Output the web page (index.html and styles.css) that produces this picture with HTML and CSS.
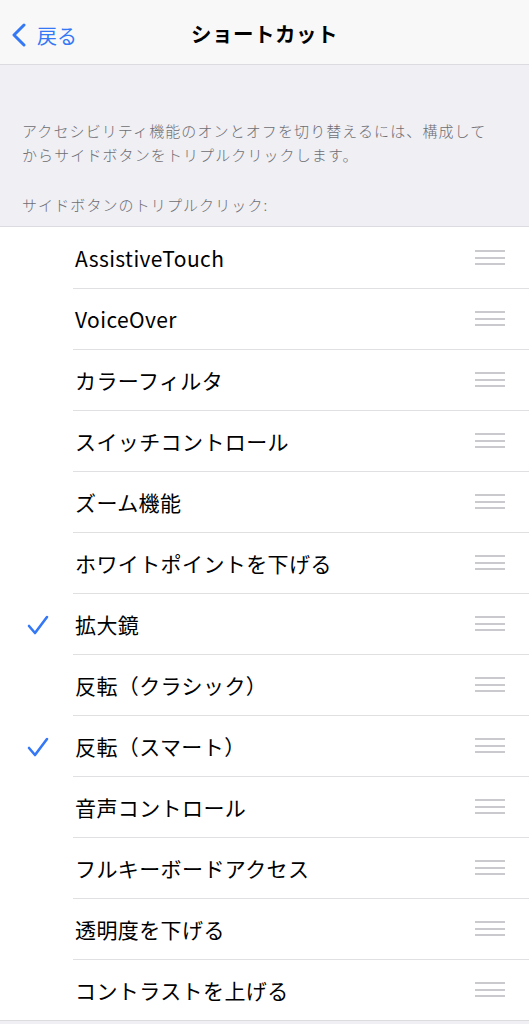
FILE: index.html
```html
<!DOCTYPE html>
<html lang="ja">
<head>
  <meta charset="UTF-8">
  <meta name="viewport" content="width=device-width, initial-scale=1.0">
  <title>ショートカット</title>
  <link rel="stylesheet" href="styles.css">
</head>
<body>
  <div class="navbar">
    <div class="back">
      <svg class="chevron" width="16" height="24" viewBox="0 0 16 24"><path d="M13 2 L3 12 L13 22" fill="none" stroke="#3478f6" stroke-width="3" stroke-linecap="round" stroke-linejoin="round"/></svg>
      <span>戻る</span>
    </div>
    <div class="nav-title">ショートカット</div>
  </div>

  <div class="desc">アクセシビリティ機能のオンとオフを切り替えるには、構成してからサイドボタンをトリプルクリックします。</div>
  <div class="section-head">サイドボタンのトリプルクリック:</div>

  <div class="list">
    <div class="row"><div class="check"></div><div class="label">AssistiveTouch</div><div class="grip"><i></i><i></i><i></i></div></div>
    <div class="row"><div class="check"></div><div class="label">VoiceOver</div><div class="grip"><i></i><i></i><i></i></div></div>
    <div class="row"><div class="check"></div><div class="label">カラーフィルタ</div><div class="grip"><i></i><i></i><i></i></div></div>
    <div class="row"><div class="check"></div><div class="label">スイッチコントロール</div><div class="grip"><i></i><i></i><i></i></div></div>
    <div class="row"><div class="check"></div><div class="label">ズーム機能</div><div class="grip"><i></i><i></i><i></i></div></div>
    <div class="row"><div class="check"></div><div class="label">ホワイトポイントを下げる</div><div class="grip"><i></i><i></i><i></i></div></div>
    <div class="row"><div class="check"><svg width="22" height="20" viewBox="0 0 22 20"><path d="M2 11 L8 18 L20 2" fill="none" stroke="#3478f6" stroke-width="2.6" stroke-linecap="round" stroke-linejoin="round"/></svg></div><div class="label">拡大鏡</div><div class="grip"><i></i><i></i><i></i></div></div>
    <div class="row"><div class="check"></div><div class="label">反転（クラシック）</div><div class="grip"><i></i><i></i><i></i></div></div>
    <div class="row"><div class="check"><svg width="22" height="20" viewBox="0 0 22 20"><path d="M2 11 L8 18 L20 2" fill="none" stroke="#3478f6" stroke-width="2.6" stroke-linecap="round" stroke-linejoin="round"/></svg></div><div class="label">反転（スマート）</div><div class="grip"><i></i><i></i><i></i></div></div>
    <div class="row"><div class="check"></div><div class="label">音声コントロール</div><div class="grip"><i></i><i></i><i></i></div></div>
    <div class="row"><div class="check"></div><div class="label">フルキーボードアクセス</div><div class="grip"><i></i><i></i><i></i></div></div>
    <div class="row"><div class="check"></div><div class="label">透明度を下げる</div><div class="grip"><i></i><i></i><i></i></div></div>
    <div class="row"><div class="check"></div><div class="label">コントラストを上げる</div><div class="grip"><i></i><i></i><i></i></div></div>
  </div>
</body>
</html>
```

FILE: styles.css
```css
body { margin: 0; background: #efeff4; font-family: "Noto Sans CJK JP", "Noto Sans", sans-serif; color: #000; }
.navbar { height: 64px; background: #f8f8f9; border-bottom: 1px solid #dcdce0; display: flex; align-items: center; justify-content: center; position: relative; }
.back { position: absolute; left: 11px; top: 0; height: 70px; display: flex; align-items: center; gap: 10px; color: #3478f6; font-size: 20px; }
.nav-title { font-size: 20.5px; font-weight: bold; letter-spacing: 0.5px; margin-top: 2px; }
.desc { padding: 54px 36px 0 22px; font-size: 15px; line-height: 24px; color: #6d6d72; letter-spacing: 1.1px; font-weight: 300; }
.section-head { padding: 26px 22px 0 22px; font-size: 15px; line-height: 24px; color: #6d6d72; letter-spacing: 1.1px; height: 33px; font-weight: 300; }
.list { background: #fff; border-top: 1px solid #dcdce0; border-bottom: 1px solid #dcdce0; }
.row { display: flex; align-items: center; height: 61px; position: relative; }
.row + .row::before { content: ""; position: absolute; left: 73px; right: 0; top: 0; height: 1px; background: #e0e0e3; }
.check { width: 75px; display: flex; justify-content: center; padding-top: 2px; }
.label { flex: 1; font-size: 21px; letter-spacing: 0.4px; }
.grip { width: 30px; margin-right: 24px; display: flex; flex-direction: column; gap: 4.5px; }
.grip i { display: block; height: 2px; background: #c9c9ce; }
```
